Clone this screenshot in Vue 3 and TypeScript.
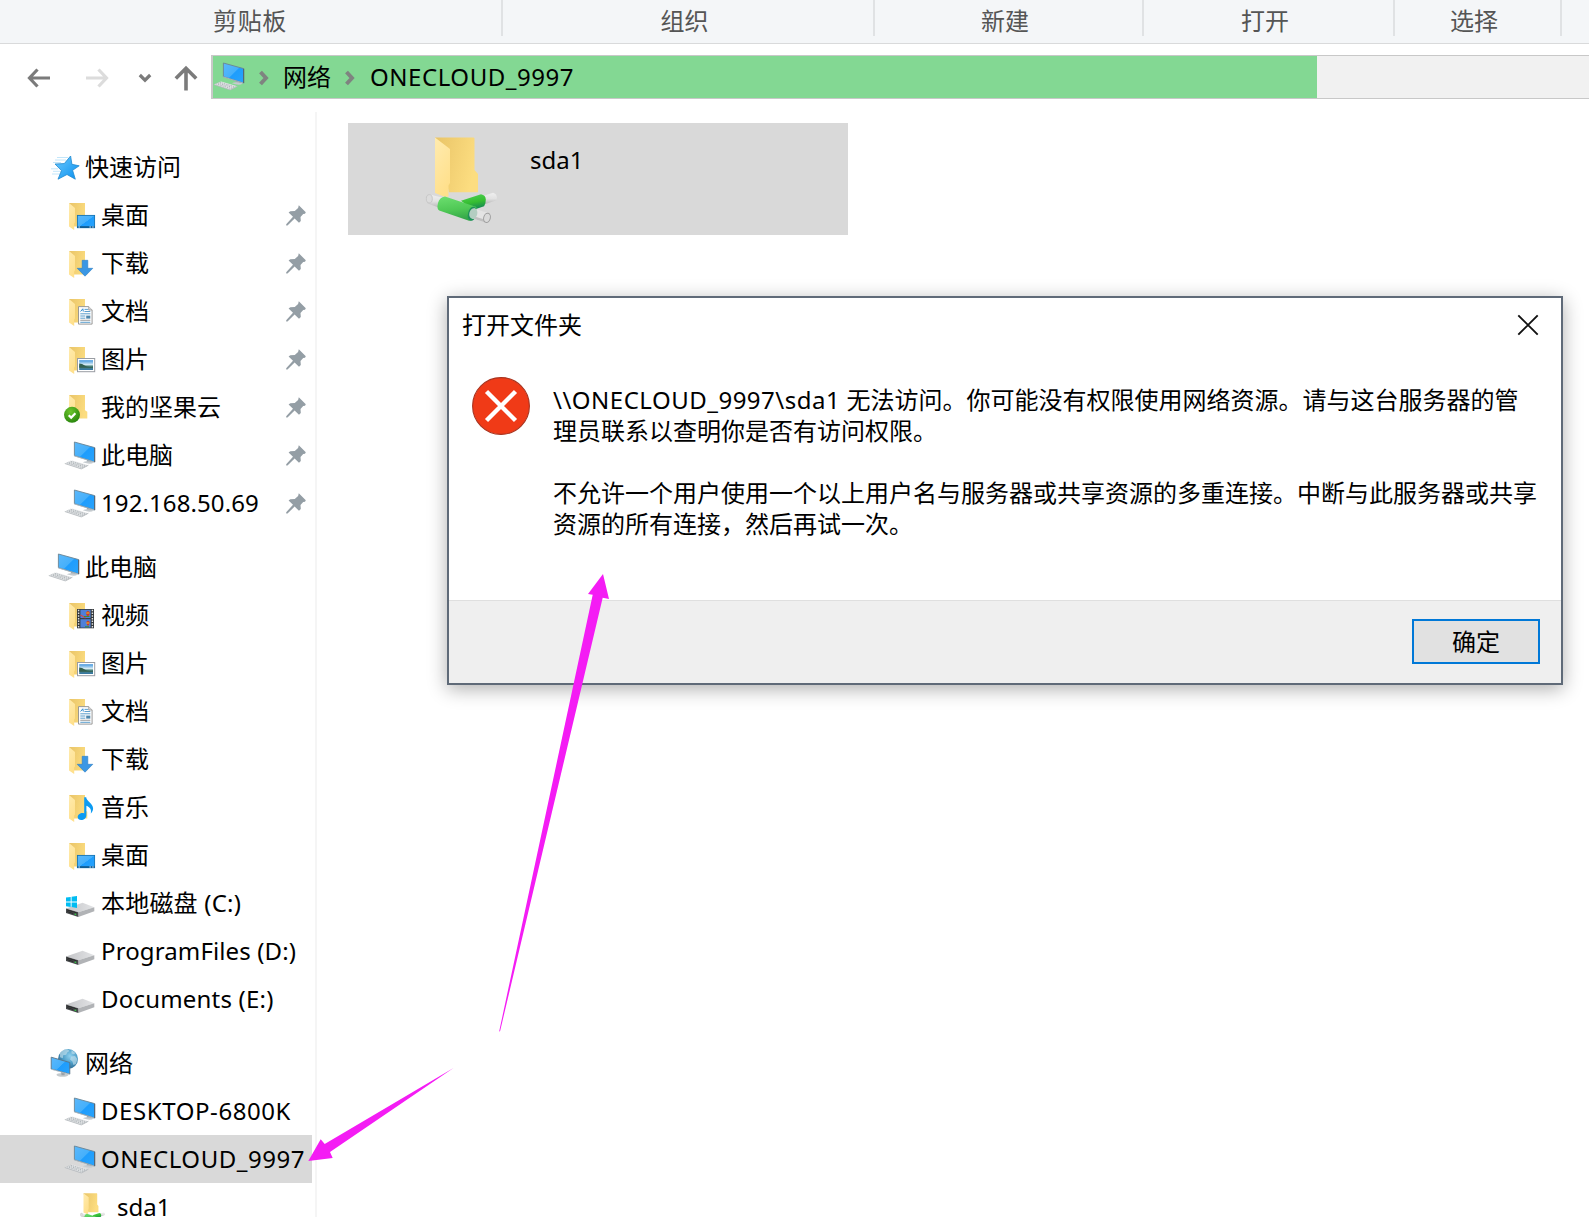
<script setup lang="ts">
interface NavItem {
  label: string
  icon: string
  level: 1 | 2 | 3
  pinned?: boolean
  selected?: boolean
  spacing?: number
}

const ribbonGroups: { label: string; width: number }[] = [
  { label: '剪贴板', width: 503 },
  { label: '组织', width: 372 },
  { label: '新建', width: 269 },
  { label: '打开', width: 251 },
  { label: '选择', width: 167 },
]

const navGroups: NavItem[][] = [
  [
    { label: '快速访问', icon: 'star', level: 1 },
    { label: '桌面', icon: 'desktop', level: 2, pinned: true },
    { label: '下载', icon: 'download', level: 2, pinned: true },
    { label: '文档', icon: 'document', level: 2, pinned: true },
    { label: '图片', icon: 'picture', level: 2, pinned: true },
    { label: '我的坚果云', icon: 'nutcloud', level: 2, pinned: true },
    { label: '此电脑', icon: 'pc', level: 2, pinned: true },
    { label: '192.168.50.69', icon: 'pc', level: 2, pinned: true, spacing: 0.1 },
  ],
  [
    { label: '此电脑', icon: 'pc', level: 1 },
    { label: '视频', icon: 'video', level: 2 },
    { label: '图片', icon: 'picture', level: 2 },
    { label: '文档', icon: 'document', level: 2 },
    { label: '下载', icon: 'download', level: 2 },
    { label: '音乐', icon: 'music', level: 2 },
    { label: '桌面', icon: 'desktop', level: 2 },
    { label: '本地磁盘 (C:)', icon: 'drive-c', level: 2, spacing: 0.2 },
    { label: 'ProgramFiles (D:)', icon: 'drive', level: 2, spacing: 0.12 },
    { label: 'Documents (E:)', icon: 'drive', level: 2, spacing: 0.2 },
  ],
  [
    { label: '网络', icon: 'network', level: 1 },
    { label: 'DESKTOP-6800K', icon: 'pc', level: 2, spacing: 0.58 },
    { label: 'ONECLOUD_9997', icon: 'pc', level: 2, selected: true, spacing: 0.55 },
    { label: 'sda1', icon: 'share', level: 3 },
  ],
]
</script>

<template>
  <div class="explorer">
    <svg class="defs" width="0" height="0" aria-hidden="true">
      <defs>
        <linearGradient id="gBack" x1="0" y1="0" x2="1" y2="0.3">
          <stop offset="0" stop-color="#e9c467" /><stop offset="1" stop-color="#fcdd80" />
        </linearGradient>
        <linearGradient id="gFlap" x1="0" y1="0" x2="0.4" y2="1">
          <stop offset="0" stop-color="#ffebaf" /><stop offset="1" stop-color="#ffe08c" />
        </linearGradient>
        <linearGradient id="gBlue" x1="0" y1="0" x2="1" y2="1">
          <stop offset="0" stop-color="#5cb8fb" /><stop offset="0.5" stop-color="#45b0fb" /><stop offset="0.52" stop-color="#1e9dfd" /><stop offset="1" stop-color="#2aa3fb" />
        </linearGradient>
        <linearGradient id="gStar" x1="0" y1="0" x2="1" y2="1">
          <stop offset="0" stop-color="#6fcbff" /><stop offset="1" stop-color="#078fee" />
        </linearGradient>
        <linearGradient id="gGreen" x1="0" y1="0" x2="0.2" y2="1">
          <stop offset="0" stop-color="#6ddf70" /><stop offset="0.6" stop-color="#4fc855" /><stop offset="1" stop-color="#35a84a" />
        </linearGradient>
        <linearGradient id="gBranch" x1="0" y1="0" x2="0.3" y2="1">
          <stop offset="0" stop-color="#52d556" /><stop offset="0.6" stop-color="#35bd31" /><stop offset="1" stop-color="#168a52" />
        </linearGradient>
        <linearGradient id="gPipe" x1="0" y1="0" x2="0" y2="1">
          <stop offset="0" stop-color="#efefef" /><stop offset="0.5" stop-color="#e2e2e2" /><stop offset="1" stop-color="#b4b4b4" />
        </linearGradient>
        <linearGradient id="gSky" x1="0" y1="0" x2="0" y2="1">
          <stop offset="0" stop-color="#3f94dd" /><stop offset="0.45" stop-color="#d8ecf4" /><stop offset="0.62" stop-color="#4c8279" /><stop offset="1" stop-color="#3577a8" />
        </linearGradient>
        <linearGradient id="gDrive" x1="0" y1="0" x2="1" y2="0">
          <stop offset="0" stop-color="#c3c4c7" /><stop offset="1" stop-color="#e3e4e6" />
        </linearGradient>
        <radialGradient id="gGlobe" cx="0.6" cy="0.35" r="0.7">
          <stop offset="0" stop-color="#8fd0ee" /><stop offset="0.55" stop-color="#4a9bc5" /><stop offset="1" stop-color="#2b648c" />
        </radialGradient>
        <radialGradient id="gOk" cx="0.4" cy="0.3" r="0.75">
          <stop offset="0" stop-color="#6cc52c" /><stop offset="1" stop-color="#26830c" />
        </radialGradient>
      </defs>

      <symbol id="folder" viewBox="0 0 32 32">
        <path d="M5 4h16v15.3l2.3 1.4v6.8H10z" fill="url(#gBack)" />
        <path d="M5 4l6 4.9v14.6l-.8 1V31L5 27.6z" fill="url(#gFlap)" />
      </symbol>
      <symbol id="star" viewBox="0 0 32 32">
        <path d="M9 6.5h11M7 9h11M5 11.500h8M5 20.3h8M3 17.800h7M4 23h8" stroke="#b4dff9" stroke-width=".8" fill="none" />
        <path d="M22.6 5l1.3 8.3 7.3 1.5-6.6 4.5 2.7 8.9-8.3-4.7-9 4.7 3.5-8.6L7 13l9.3-.4z" fill="url(#gStar)" stroke="#2089cf" stroke-width=".8" />
      </symbol>
      <symbol id="pc" viewBox="0 0 32 32">
        <path d="M23 20.500l4 1-.5 2-4 .2z" fill="#9fa7ad" />
        <path d="M18.800 23.300q4-2.200 11 .2-3.500 2.600-11-.2z" fill="#c5cbcf" />
        <path d="M.8 24.400l7.400-2.900 16.200 4.700-7.100 3.700z" fill="#e3e5e7" />
        <path d="M.8 24.500l16.500 5.400 7.100-3.700" fill="none" stroke="#b0b5b9" stroke-width=".8" />
        <path d="M2.800 23.700l16.400 5.200M4.600 23l16.500 4.900M6.500 22.200l16.200 4.800" stroke="#adb3b7" stroke-width=".9" stroke-dasharray="1.500 .8" fill="none" />
        <path d="M10.4 3l20.2 5.6v14.400l-20.200-6.300z" fill="url(#gBlue)" stroke="#6b8494" stroke-width=".9" />
        <path d="M10.2 16.900l20.200 6.200" stroke="#aebbc4" stroke-width=".8" />
        <path d="M30.700 8.800v14.300" stroke="#4f6170" stroke-width="1" />
      </symbol>
      <symbol id="desktop" viewBox="0 0 32 32">
        <use href="#folder" />
        <rect x="13.4" y="16.4" width="17.2" height="12.3" fill="url(#gBlue)" stroke="#1173b5" stroke-width=".9" />
        <path d="M13.4 28h17.2" stroke="#0c4f80" stroke-width="1.4" />
        <path d="M14.5 28h1.3M25.5 28h1.3M28.3 28h1.3" stroke="#fff" stroke-width="1" />
      </symbol>
      <symbol id="download" viewBox="0 0 32 32">
        <use href="#folder" />
        <path d="M18.2 13.3h5.6v8h5l-7.8 7.9-7.8-7.9h5z" fill="#3b97e4" stroke="#2a7cc4" stroke-width=".6" />
      </symbol>
      <symbol id="document" viewBox="0 0 32 32">
        <use href="#folder" />
        <path d="M14.5 11.6h10.2l3.4 3.4v14.1H14.5z" fill="#fcfcfc" stroke="#8e8e8e" stroke-width=".9" />
        <path d="M24.7 11.6V15h3.4" fill="#ddd" stroke="#8e8e8e" stroke-width=".7" />
        <path d="M16.600 16.500l2.200-2.700.5 2.700" fill="none" stroke="#2d8bd0" stroke-width="1" />
        <path d="M20.500 14.4h3.500M20.500 16.5h5.800M16.3 18.800h10M16.3 21h5M16.3 23.2h5M16.3 27.3h10" stroke="#4a94c8" stroke-width=".9" />
        <path d="M16.3 25.3h10" stroke="#888" stroke-width=".8" />
        <rect x="22.200" y="20.6" width="4.1" height="3" fill="#4f87ad" />
      </symbol>
      <symbol id="picture" viewBox="0 0 32 32">
        <use href="#folder" />
        <rect x="13.5" y="15.5" width="17.2" height="13.2" fill="#fff" stroke="#999da3" stroke-width="1" />
        <rect x="15.2" y="17.2" width="13.8" height="9.8" fill="url(#gSky)" />
        <path d="M15.2 20.5q3 0 5.5 2t8.3 1.2v1H15.2z" fill="#34604f" />
      </symbol>
      <symbol id="nutcloud" viewBox="0 0 32 32">
        <use href="#folder" />
        <circle cx="8" cy="23.8" r="8" fill="url(#gOk)" />
        <path d="M4.7 24.2l2.5 2.4 4.2-4.3" fill="none" stroke="#fff" stroke-width="2.2" />
      </symbol>
      <symbol id="video" viewBox="0 0 32 32">
        <use href="#folder" />
        <rect x="13" y="10" width="17" height="19.3" fill="#34383b" />
        <path d="M14.6 10.8v18M28.4 10.8v18" stroke="#e4e4e4" stroke-width="1.4" stroke-dasharray="1.5 1.2" />
        <rect x="16.4" y="10.8" width="10.2" height="8.3" fill="#4f80d8" />
        <rect x="16.4" y="20.2" width="10.2" height="8.4" fill="#4f80d8" />
        <path d="M22 13.2l2-1.5 1.8 1.5-.6 3-1.3 1-1.4-1zM22.2 23l1.8-1.6 1.8 1.6-1.2 3.6h-1.2z" fill="#c93b27" />
        <path d="M22.3 14h3M22.3 24h3" stroke="#f0c12d" stroke-width="1.1" />
        <path d="M16.5 16l3.5 2 1.5 1" stroke="#d24a48" stroke-width="1.2" fill="none" />
        <path d="M20 17.5h5.5M21 27.8h4" stroke="#3a8b38" stroke-width="1.1" />
      </symbol>
      <symbol id="music" viewBox="0 0 32 32">
        <use href="#folder" />
        <path d="M20.2 6.3h2c.3 4.2 6.9 6.2 6.9 11.3 0 2.2-1 3.7-2.3 4.9.9-4.4-1-6.3-4.4-7.7v9.4c0 3-2.5 4.8-5.2 4.8-2.1 0-3.5-1.1-3.5-2.9 0-2.3 2.3-4 4.8-4 .7 0 1.3.1 1.7.4z" fill="#0c9bf2" />
      </symbol>
      <symbol id="drive" viewBox="0 0 32 32">
        <path d="M2 21.6l16.6-5.9 11.7 4.6-16 5z" fill="url(#gDrive)" />
        <path d="M14.3 25.3l16-5v3.9l-16 5.7z" fill="#b1b3b6" />
        <path d="M2 21.6l12.3 3.7v4.6L2 26.1z" fill="#46494b" />
        <path d="M3.2 23l9.5 2.9M3.2 24.6l6 1.9" stroke="#222" stroke-width=".8" />
        <path d="M11.4 26.6v1.5" stroke="#33c443" stroke-width="1.5" />
      </symbol>
      <symbol id="drive-c" viewBox="0 0 32 32">
        <use href="#drive" />
        <path d="M2 10.6l4.7-.7v4.6H2zM7.6 9.8L13 9v5.5H7.6zM2 15.4h4.7V20L2 19.3zM7.6 15.4H13v5.5l-5.4-.8z" fill="#00bcf2" />
      </symbol>
      <symbol id="network" viewBox="0 0 32 32">
        <circle cx="20" cy="12" r="10" fill="url(#gGlobe)" />
        <path d="M12 6q3-4 8-3.6l1.5 1.5-2.3 1.5-1 2.3-3 .6-.4 3-2.8-1zM23.5 3l4 3-1.5 1.2-2.5-.8zM23 9.5l4-.6 2.4 3-1.4 5-2.6 1-1-3.5-2.3-2z" fill="#cbe4ee" opacity=".6" />
        <ellipse cx="14.5" cy="27.8" rx="6" ry="1.9" fill="#c4cacd" />
        <path d="M13 24l4 1.2-.5 3h-3z" fill="#9aa3a9" />
        <path d="M3.2 10.2l18.6 5.3v11.6L3.2 22z" fill="url(#gBlue)" stroke="#597487" stroke-width=".9" />
        <path d="M3.2 22.3l18.6 5.1" stroke="#cbd4da" stroke-width=".7" />
      </symbol>
      <symbol id="shared-folder" viewBox="0 0 72 88">
        <path d="M10 .4h38.3q1.2 0 1.2 1.2V33l3.5 4v18.3H24z" fill="url(#gBack)" />
        <path d="M10 .6L25 12v34l-1.5 2.5v11L20 60l-10-4z" fill="url(#gFlap)" />
        <path d="M3.5 57.3L17 60.500l-2 10.500L2 66.3Q-1 60 3.5 57.3z" fill="url(#gPipe)" />
        <ellipse cx="4.3" cy="61.8" rx="3" ry="4.2" fill="#dcdcdc" stroke="#c0c0c0" stroke-width=".8" />
        <path d="M58 59l10-3.3q5 1.3 3.6 7.6L59 67.5z" fill="url(#gPipe)" />
        <path d="M36 63.8L56 57.3q4.7.8 4.8 5.2t-1.7 6.7L48 73z" fill="url(#gBranch)" />
        <path d="M20 59.400q-5.500.6-7 6.600t1.200 7.500L44 83.800q4.500.6 6.700-7t-.7-7.400z" fill="url(#gGreen)" />
        <ellipse cx="47.300" cy="76.800" rx="4.300" ry="7.200" transform="rotate(14 47.3 76.8)" fill="#1f9159" />
        <path d="M49 71.500l14.300 4.500-2.600 9.500-13-4z" fill="#e4e4e4" />
        <path d="M47 81.300l13.700 4.200.8-2.500-13.800-4z" fill="#bfbfbf" />
        <ellipse cx="48.300" cy="76.600" rx="4" ry="5.400" transform="rotate(14 48.3 76.6)" fill="#b3cdc1" />
        <ellipse cx="62" cy="80.800" rx="3.300" ry="4.700" fill="#dadada" stroke="#9e9e9e" stroke-width="1" transform="rotate(14 62 80.8)" />
      </symbol>
      <symbol id="share" viewBox="0 -6 92 92">
        <use href="#shared-folder" x="0" y="0" width="72" height="88" />
      </symbol>
      <symbol id="pin" viewBox="0 0 20 21">
        <path d="M12.800.3l7 7-.8 1.500-1.800.1-2.700 3 .3 4.200-1.800 1.700-4.400-4.200L1.500 20.500H.2v-1.300L7 11.800 2.600 7.600l1.700-1.400 4.500-.1 3.300-3.100z" fill="#949ea5" />
      </symbol>
    </svg>

    <header class="ribbon">
      <div v-for="g in ribbonGroups" :key="g.label" class="ribbon-group" :style="{ width: g.width + 'px' }">
        {{ g.label }}
      </div>
    </header>

    <div class="toolbar">
      <svg class="nav-buttons" width="211" height="68" viewBox="0 0 211 68" fill="none" stroke="#7b7b7b">
        <path d="M50 34H30M37.500 25.500L29.500 34l8 8.500" stroke-width="3.200" />
        <path d="M86 34h20M98.500 25.500l8 8.500-8 8.500" stroke="#dcdcdc" stroke-width="3.200" />
        <path d="M139.800 31l5.200 5.200 5.200-5.200" stroke-width="3.200" />
        <path d="M186 46.500V25M175.800 34.500L186 24.300l10.200 10.200" stroke-width="3.600" />
      </svg>
      <div class="address">
        <div class="progress">
          <svg class="icon" width="32" height="32"><use href="#pc" /></svg>
          <svg class="crumb-arrow" width="10" height="16" viewBox="0 0 10 16"><path d="M1.500 2L7 8l-5.500 6" fill="none" stroke="#7f8380" stroke-width="3.900" /></svg>
          <span class="crumb">网络</span>
          <svg class="crumb-arrow second" width="10" height="16" viewBox="0 0 10 16"><path d="M1.500 2L7 8l-5.500 6" fill="none" stroke="#7f8380" stroke-width="3.900" /></svg>
          <span class="crumb host">ONECLOUD_9997</span>
        </div>
      </div>
    </div>

    <main class="body">
      <nav class="sidebar">
        <div v-for="(group, gi) in navGroups" :key="gi" class="nav-group">
          <div
            v-for="item in group"
            :key="item.label"
            class="nav-item"
            :class="['level-' + item.level, { selected: item.selected }]"
          >
            <svg class="icon" width="32" height="32"><use :href="'#' + item.icon" /></svg>
            <span class="label" :style="item.spacing ? { letterSpacing: item.spacing + 'px' } : undefined">{{ item.label }}</span>
            <svg v-if="item.pinned" class="pin" width="20" height="21"><use href="#pin" /></svg>
          </div>
        </div>
      </nav>
      <section class="content">
        <div class="tile">
          <svg width="72" height="88"><use href="#shared-folder" /></svg>
          <span class="tile-name">sda1</span>
        </div>
      </section>
    </main>

    <div class="dialog" role="alertdialog">
      <div class="dialog-title">
        <span>打开文件夹</span>
        <svg width="22" height="22" viewBox="0 0 22 22"><path d="M1.300 1.300l19.400 19.400M20.700 1.300L1.300 20.700" stroke="#111" stroke-width="1.900" /></svg>
      </div>
      <div class="dialog-body">
        <svg class="error" width="58" height="58" viewBox="0 0 58 58">
          <circle cx="29" cy="29" r="28.400" fill="#f03a17" stroke="#a83420" stroke-width="1.100" />
          <path d="M14.500 14.500l29 29M43.500 14.500l-29 29" stroke="#fff" stroke-width="4.400" />
        </svg>
        <div class="message">
          <p><span class="path">\\ONECLOUD_9997\sda1</span> 无法访问。你可能没有权限使用网络资源。请与这台服务器的管<br />理员联系以查明你是否有访问权限。</p>
          <p>不允许一个用户使用一个以上用户名与服务器或共享资源的多重连接。中断与此服务器或共享<br />资源的所有连接，然后再试一次。</p>
        </div>
      </div>
      <div class="dialog-footer">
        <button class="ok">确定</button>
      </div>
    </div>

    <svg class="marks" width="1589" height="1217" viewBox="0 0 1589 1217" fill="#f41cf4">
      <path d="M603 574l6 25-6.300-1.200L500 1031.500l-.8-.2 93.500-436.600-4.700-.7z" />
      <path d="M308.300 1161l12.400-21.700 4 4.700L453.500 1068l-123.500 84 2.700 6z" />
    </svg>
  </div>
</template>

<style>
body {
  margin: 0;
  background: #fff;
}
</style>

<style scoped>
.explorer {
  position: relative;
  width: 1589px;
  height: 1217px;
  overflow: hidden;
  background: #fff;
  color: #000;
  font: 24px/32px "Noto Sans", "Noto Sans CJK SC", sans-serif;
  display: flex;
  flex-direction: column;
}
.defs {
  position: absolute;
}
.icon,
.pin,
.crumb-arrow {
  display: block;
  flex: none;
}
.ribbon {
  flex: none;
  display: flex;
  height: 43px;
  background: #f4f6f8;
  border-bottom: 1px solid #d9dadb;
}
.ribbon-group {
  flex: none;
  box-sizing: border-box;
  height: 36px;
  padding: 5px 7px 0 0;
  border-right: 2px solid #e0e2e4;
  text-align: center;
  color: #555;
}
.ribbon-group:first-child {
  padding-right: 1px;
  letter-spacing: 0.6px;
}
.toolbar {
  flex: none;
  display: flex;
  height: 68px;
}
.nav-buttons {
  flex: none;
}
.address {
  flex: 1;
  box-sizing: border-box;
  height: 44px;
  margin-top: 11px;
  border: 1px solid #c8c8c8;
  border-left: 2px solid #c9c9c9;
  border-right: 0;
  background: #f1f1f1;
}
.progress {
  display: flex;
  align-items: center;
  width: 1104px;
  height: 42px;
  background: #83d893;
}
.progress .icon {
  margin: -2px 0 0 0;
}
.crumb-arrow {
  margin: 2px 0 0 14px;
}
.crumb {
  margin-left: 14px;
}
.crumb.host {
  margin-left: 15px;
  letter-spacing: 0.55px;
}
.body {
  flex: 1;
  min-height: 0;
  display: flex;
}
.sidebar {
  flex: none;
  box-sizing: border-box;
  width: 317px;
  padding-top: 31px;
  border-right: 2px solid #f5f5f5;
}
.nav-group {
  margin-bottom: 16px;
}
.nav-item {
  box-sizing: border-box;
  display: flex;
  align-items: center;
  width: 312px;
  height: 48px;
  padding-right: 6px;
}
.nav-item.level-1 { padding-left: 48px; }
.nav-item.level-2 { padding-left: 64px; }
.nav-item.level-3 { padding-left: 80px; }
.nav-item.selected { background: #d9d9d9; }
.label {
  margin-left: 5px;
  white-space: nowrap;
}
.pin {
  margin-left: auto;
}
.content {
  flex: 1;
  padding: 11px 0 0 31px;
}
.tile {
  box-sizing: border-box;
  display: flex;
  align-items: flex-start;
  width: 500px;
  height: 112px;
  padding: 14px 0 0 77px;
  background: #d9d9d9;
}
.tile-name {
  margin: 7px 0 0 33px;
}
.dialog {
  position: absolute;
  left: 447px;
  top: 296px;
  box-sizing: border-box;
  width: 1116px;
  height: 389px;
  border: 2px solid #5f6a78;
  background: #fff;
  display: flex;
  flex-direction: column;
  box-shadow: 0 4px 18px rgba(0, 0, 0, 0.32);
}
.dialog-title {
  display: flex;
  justify-content: space-between;
  align-items: flex-start;
  padding: 11px 22px 0 13px;
}
.dialog-title svg {
  margin-top: 5px;
}
.dialog-body {
  flex: 1;
  display: flex;
  padding: 36px 0 0 23px;
}
.error {
  flex: none;
}
.message {
  margin: 7px 0 0 23px;
  line-height: 31px;
  white-space: nowrap;
}
.message p {
  margin: 0 0 31px;
}
.path {
  letter-spacing: 0.5px;
}
.dialog-footer {
  flex: none;
  box-sizing: border-box;
  height: 83px;
  padding: 18px 21px 0 0;
  border-top: 1px solid #dfdfdf;
  background: #efefef;
  display: flex;
  justify-content: flex-end;
  align-items: flex-start;
}
.ok {
  box-sizing: border-box;
  width: 128px;
  height: 45px;
  padding: 0;
  border: 2px solid #0078d7;
  background: #e1e1e1;
  color: #000;
  font: inherit;
}
.marks {
  position: absolute;
  left: 0;
  top: 0;
  pointer-events: none;
}
</style>
